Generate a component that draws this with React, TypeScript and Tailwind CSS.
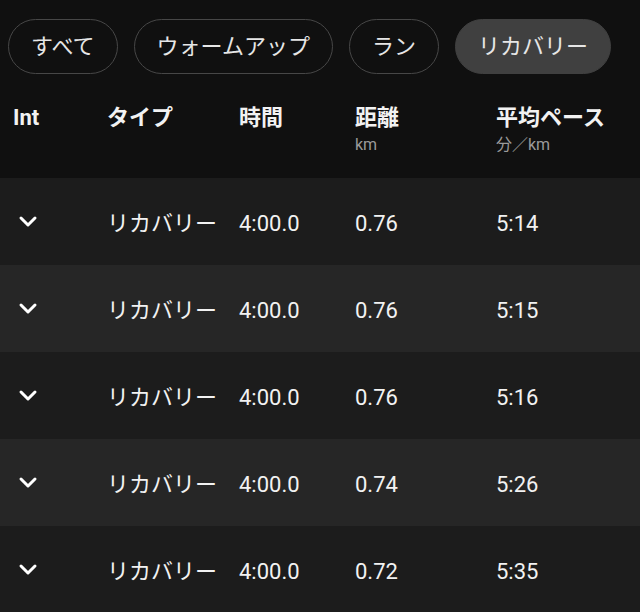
const filters = ["すべて", "ウォームアップ", "ラン", "リカバリー"];

const intervals = [
  { type: "リカバリー", time: "4:00.0", distance: "0.76", pace: "5:14" },
  { type: "リカバリー", time: "4:00.0", distance: "0.76", pace: "5:15" },
  { type: "リカバリー", time: "4:00.0", distance: "0.76", pace: "5:16" },
  { type: "リカバリー", time: "4:00.0", distance: "0.74", pace: "5:26" },
  { type: "リカバリー", time: "4:00.0", distance: "0.72", pace: "5:35" },
];

const cols = "grid grid-cols-[94px_132px_116px_141px_1fr] pl-[13px]";

function Chevron() {
  return (
    <svg width="20" height="14" viewBox="0 0 20 14" className="ml-[5px]">
      <polyline
        points="3,3 10,10 17,3"
        fill="none"
        stroke="#ffffff"
        strokeWidth="3"
        strokeLinecap="round"
        strokeLinejoin="round"
      />
    </svg>
  );
}

export default function App() {
  const active = "リカバリー";

  return (
    <div className="w-[640px] min-h-[612px] bg-[#101010] text-[#f2f2f2] font-['Roboto','Noto_Sans_CJK_JP',sans-serif] overflow-hidden">
      {/* filter chips */}
      <div className="flex gap-[16px] pl-[8px] pt-[19px]">
        {filters.map((f) => (
          <div
            key={f}
            className={`h-[55px] flex items-center rounded-full px-[22px] text-[22px] leading-none ${
              f === active
                ? "bg-[#404040] border-[1.5px] border-[#404040] text-[#e6e6e6]"
                : "border-[1.5px] border-[#474747] text-[#e6e6e6]"
            }`}
          >
            {f}
          </div>
        ))}
      </div>

      {/* header */}
      <div className={`${cols} h-[104px] pt-[30px]`}>
        <div className="text-[22px] leading-[28px] font-bold">Int</div>
        <div className="text-[22px] leading-[28px] font-bold">タイプ</div>
        <div className="text-[22px] leading-[28px] font-bold">時間</div>
        <div>
          <div className="text-[22px] leading-[28px] font-bold">距離</div>
          <div className="mt-[3px] text-[16px] leading-[20px] text-[#9a9a9a]">km</div>
        </div>
        <div>
          <div className="text-[22px] leading-[28px] font-bold whitespace-nowrap">平均ペース</div>
          <div className="mt-[3px] text-[16px] leading-[20px] text-[#9a9a9a]">分／km</div>
        </div>
      </div>

      {/* rows */}
      {intervals.map((r, i) => (
        <div
          key={i}
          className={`${cols} h-[87px] items-center pt-[3px] text-[22px] ${
            i % 2 === 0 ? "bg-[#1c1c1c]" : "bg-[#262626]"
          }`}
        >
          <div className="flex items-center -mt-[3px]">
            <Chevron />
          </div>
          <div className="whitespace-nowrap">{r.type}</div>
          <div>{r.time}</div>
          <div>{r.distance}</div>
          <div>{r.pace}</div>
        </div>
      ))}
    </div>
  );
}
